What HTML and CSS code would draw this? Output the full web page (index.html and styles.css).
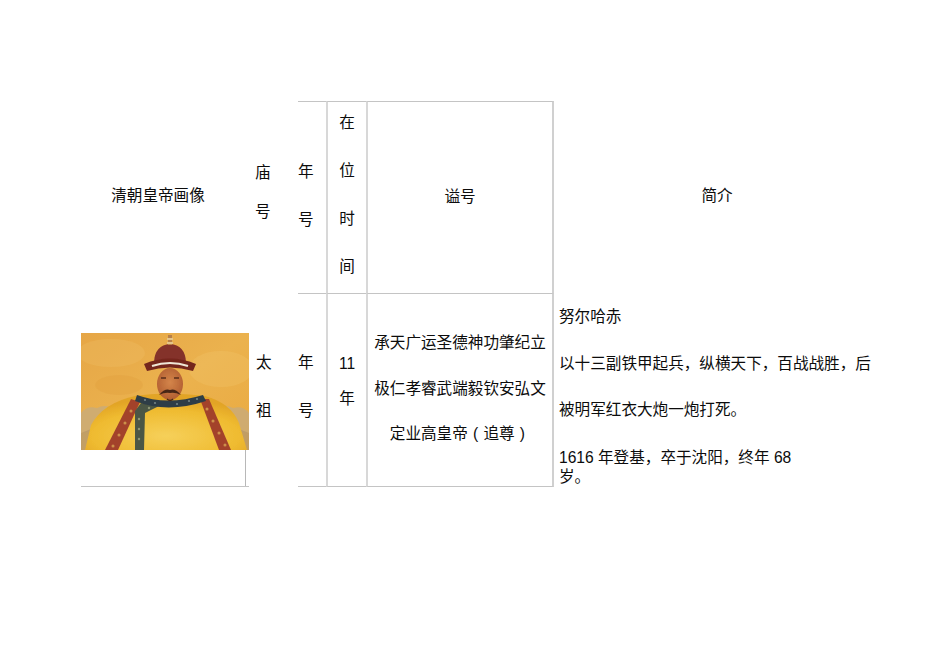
FILE: index.html
```html
<!DOCTYPE html>
<html lang="zh-CN">
<head>
<meta charset="utf-8">
<title>清朝皇帝</title>
<link rel="stylesheet" href="styles.css">
</head>
<body>
<div class="page">
  <div class="table">
    <div class="cell h-portrait">清朝皇帝画像</div>
    <div class="cell h-miao">庙<br>号</div>
    <div class="cell h-nian b-top b-bottom">年<br>号</div>
    <div class="cell h-zai b-top b-bottom b-left"><div class="shift">在<br>位<br>时<br>间</div></div>
    <div class="cell h-shi b-top b-bottom b-left b-right">谥号</div>
    <div class="cell h-jian">简介</div>

    <div class="cell r-portrait b-bottom">
      <svg class="portrait" viewBox="0 0 168 117" width="168" height="117" aria-label="努尔哈赤画像">
        <defs>
          <linearGradient id="bg" x1="0" y1="0" x2="1" y2="1">
            <stop offset="0" stop-color="#e6a646"/>
            <stop offset="0.5" stop-color="#ebb24e"/>
            <stop offset="1" stop-color="#eaaa40"/>
          </linearGradient>
          <radialGradient id="robe" cx="0.5" cy="0.75" r="0.65">
            <stop offset="0" stop-color="#f6d05a"/>
            <stop offset="0.7" stop-color="#efbb30"/>
            <stop offset="1" stop-color="#e2a426"/>
          </radialGradient>
          <radialGradient id="face" cx="0.5" cy="0.45" r="0.6">
            <stop offset="0" stop-color="#d4854a"/>
            <stop offset="1" stop-color="#b05c30"/>
          </radialGradient>
          <filter id="soft" x="0" y="0" width="1" height="1">
            <feGaussianBlur stdDeviation="0.7"/>
          </filter>
        </defs>
        <rect width="168" height="117" fill="url(#bg)"/>
        <g filter="url(#soft)">
          <ellipse cx="30" cy="20" rx="34" ry="14" fill="#efbd60" opacity=".35"/>
          <ellipse cx="140" cy="36" rx="32" ry="18" fill="#f1c466" opacity=".35"/>
          <ellipse cx="38" cy="52" rx="24" ry="10" fill="#df9c3c" opacity=".3"/>
          <path d="M0 80 Q6 72 16 75 Q26 70 34 78 L34 95 L0 100Z" fill="#c8ab7a" opacity=".8"/>
          <path d="M168 80 Q162 72 152 75 Q142 70 134 78 L134 95 L168 100Z" fill="#c8ab7a" opacity=".8"/>
          <path d="M0 100 L10 96 L8 117 L0 117Z" fill="#b89a6a" opacity=".8"/>
          <path d="M168 100 L158 96 L160 117 L168 117Z" fill="#b89a6a" opacity=".8"/>
          <path d="M54 63 Q84 58 124 63 Q150 70 158 90 L166 117 L4 117 L10 92 Q22 70 54 63Z" fill="url(#robe)"/>
          <path d="M50 66 L59 69 L37 117 L24 117Z" fill="#a3432c"/>
          <path d="M119 66 L128 66 L150 117 L138 117Z" fill="#a3432c"/>
          <g fill="#d8a452" opacity=".8">
            <circle cx="50" cy="78" r="1.5"/><circle cx="44" cy="90" r="1.5"/><circle cx="38" cy="102" r="1.5"/><circle cx="32" cy="113" r="1.5"/>
            <circle cx="126" cy="76" r="1.5"/><circle cx="132" cy="88" r="1.5"/><circle cx="138" cy="100" r="1.5"/><circle cx="144" cy="112" r="1.5"/>
          </g>
          <path d="M60 70 L80 72 L64 80 L63 117 L54 117 L54 78Z" fill="#4b5744"/>
          <g fill="#a9b08a" opacity=".7">
            <circle cx="58" cy="86" r="1.2"/><circle cx="58" cy="96" r="1.2"/><circle cx="58" cy="106" r="1.2"/><circle cx="68" cy="75" r="1.2"/>
          </g>
          <path d="M56 62 Q86 73 122 62 L125 68 Q86 81 54 68Z" fill="#2f3d46"/>
          <g fill="#8fa2a0" opacity=".7">
            <circle cx="64" cy="67" r="1.1"/><circle cx="74" cy="70" r="1.1"/><circle cx="96" cy="71" r="1.1"/><circle cx="108" cy="68" r="1.1"/><circle cx="116" cy="66" r="1.1"/>
          </g>
          <ellipse cx="89" cy="51" rx="13" ry="16" fill="url(#face)"/>
          <path d="M80 45 h5 M93 45 h5" stroke="#5a2e1a" stroke-width="1.3"/>
          <path d="M78 62 Q84 55 89 57 Q94 55 100 62 Q94 59 89 60 Q84 59 78 62Z" fill="#4a2816"/>
          <path d="M86 66 Q89 69 92 66" stroke="#4a2816" stroke-width="1.2" fill="none"/>
          <path d="M73 29 Q74 12 89 11 Q104 12 105 29Z" fill="#84302a"/>
          <path d="M63 31 Q89 20 115 31 L112 38 Q89 31 66 38Z" fill="#74271f"/>
          <path d="M71 33 Q89 27 107 33" stroke="#efe6d6" stroke-width="2" fill="none"/>
          <rect x="87" y="2" width="4" height="10" fill="#b88048"/>
          <rect x="86" y="5" width="6" height="2" fill="#e4c48a"/>
          <rect x="86" y="9" width="6" height="2" fill="#e4c48a"/>
        </g>
      </svg>
      <div class="under"></div>
    </div>
    <div class="cell r-miao">太<br>祖</div>
    <div class="cell r-nian b-bottom">年<br>号</div>
    <div class="cell r-zai b-bottom b-left">11<br>年</div>
    <div class="cell r-shi b-bottom b-left b-right">承天广运圣德神功肇纪立<br>极仁孝睿武端毅钦安弘文<br>定业高皇帝<span class="paren">(</span>追尊<span class="paren">)</span></div>
    <div class="cell r-jian">
      <p class="p1">努尔哈赤</p>
      <p class="p2">以十三副铁甲起兵，纵横天下，百战战胜，后</p>
      <p class="p3">被明军红衣大炮一炮打死。</p>
      <p class="p4">1616 年登基，卒于沈阳，终年 68<br>岁。</p>
    </div>
  </div>
</div>
</body>
</html>
```

FILE: styles.css
```css
html, body {
  margin: 0;
  padding: 0;
  background: #ffffff;
}

body {
  font-family: "Liberation Sans", "Noto Sans CJK SC", sans-serif;
  font-size: 15.6px;
  color: #0c0c0c;
}

.page {
  padding: 101px 0 0 81px;
}

.table {
  display: grid;
  grid-template-columns: 168px 49px 28px 40px 188px 326px;
  grid-template-rows: 193px 193px;
}

.cell {
  box-sizing: border-box;
  line-height: 20px;
  white-space: nowrap;
}

.b-top { border-top: 1px solid #c4c4c4; }
.b-bottom { border-bottom: 1px solid #c4c4c4; }
.b-left { border-left: 2px solid #d8d8d8; }
.b-right { border-right: 2px solid #d0d0d0; }

/* header row */
.h-portrait {
  padding: 85px 14px 0 0;
  text-align: center;
}

.h-miao {
  padding: 52px 0 0 6px;
  line-height: 39px;
}

.h-nian {
  padding-top: 46px;
  line-height: 48px;
}

.h-zai {
  text-align: center;
  line-height: 48px;
}

.h-zai .shift {
  margin-top: -3px;
}

.h-shi {
  padding-top: 85px;
  text-align: center;
}

.h-jian {
  padding-top: 85px;
  text-align: center;
}

/* data row */
.r-portrait {
  padding-top: 39px;
  display: flex;
  flex-direction: column;
}

.portrait {
  display: block;
}

.under {
  width: 164px;
  flex: 1;
  border-right: 1px solid #b8b8b8;
}

.r-miao {
  padding: 45px 0 0 7px;
  line-height: 48px;
}

.r-nian {
  padding-top: 45px;
  line-height: 48px;
}

.r-zai {
  padding-top: 52px;
  line-height: 35px;
  text-align: center;
}

.r-shi {
  padding-top: 26px;
  line-height: 45.5px;
  text-align: center;
}

.paren {
  display: inline-block;
  width: 1em;
  text-align: center;
}

.r-jian {
  padding: 13px 0 0 5px;
}

.r-jian p {
  margin: 0;
  line-height: 19px;
}

.r-jian .p2 { margin-top: 28px; }
.r-jian .p3 { margin-top: 27px; }
.r-jian .p4 { margin-top: 29px; }
```
